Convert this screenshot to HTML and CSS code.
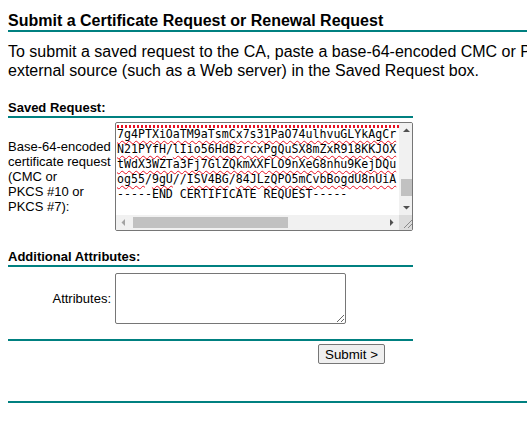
FILE: index.html
```html
<!DOCTYPE html>
<html>
<head>
    <meta charset="UTF-8">
    <title>Submit a Certificate Request or Renewal Request</title>
    <link rel="stylesheet" href="styles.css">
</head>
<body>
    <div class="page">
        <h1 class="page-title">Submit a Certificate Request or Renewal Request</h1>

        <p class="intro">To submit a saved request to the CA, paste a base-64-encoded CMC or PKCS #10 certificate request or PKCS #7 renewal request generated by an<br>external source (such as a Web server) in the Saved Request box.</p>

        <form class="request-form">
            <h2 class="section-title">Saved Request:</h2>
            <div class="field-row saved-row">
                <label class="field-label">Base-64-encoded<br>certificate request<br>(CMC or<br>PKCS #10 or<br>PKCS #7):</label>
                <div class="request-box">
                    <div class="request-text">
                        <div class="request-lines">
                            <div class="scrolled-off"><span class="sp"></span></div>
                            <div><span class="sp">7g4PTXiOaTM9aTsmCx7s31PaO74ulhvuGLYkAgCr</span></div>
                            <div><span class="sp">N21PYfH</span>/<span class="sp">lIio56HdBzrcxPgQuSX8mZxR918KKJOX</span></div>
                            <div><span class="sp">tWdX3WZTa3Fj7GlZQkmXXFLO9nXeG8nhu9KejDQu</span></div>
                            <div><span class="sp">og55</span>/<span class="sp">9gU</span>//<span class="sp">ISV4BG</span>/<span class="sp">84JLzQPO5mCvbBogdU8nUiA</span></div>
                            <div>-----END CERTIFICATE REQUEST-----</div>
                        </div>
                    </div>
                    <div class="vbar">
                        <div class="sb-btn">
                            <svg width="15" height="15" viewBox="0 0 15 15"><polygon points="4,9 11,9 7.5,5.5" fill="#505050"/></svg>
                        </div>
                        <div class="vtrack"><div class="vthumb"></div></div>
                        <div class="sb-btn">
                            <svg width="15" height="15" viewBox="0 0 15 15"><polygon points="4,6 11,6 7.5,9.5" fill="#505050"/></svg>
                        </div>
                    </div>
                    <div class="hbar">
                        <div class="sb-btn">
                            <svg width="15" height="15" viewBox="0 0 15 15"><polygon points="9,4 9,11 5.5,7.5" fill="#a3a3a3"/></svg>
                        </div>
                        <div class="htrack"><div class="hthumb"></div></div>
                        <div class="sb-btn">
                            <svg width="15" height="15" viewBox="0 0 15 15"><polygon points="6,4 6,11 9.5,7.5" fill="#505050"/></svg>
                        </div>
                    </div>
                    <div class="sb-corner">
                        <svg width="15" height="15" viewBox="0 0 15 15">
                            <line x1="13" y1="5" x2="5" y2="13" stroke="#8a8a8a" stroke-width="1"/>
                            <line x1="13" y1="9" x2="9" y2="13" stroke="#8a8a8a" stroke-width="1"/>
                        </svg>
                    </div>
                </div>
            </div>

            <h2 class="section-title">Additional Attributes:</h2>
            <div class="field-row attr-row">
                <label class="field-label align-right" for="attributes">Attributes:</label>
                <textarea id="attributes" class="attr-input"></textarea>
            </div>

            <div class="form-rule"></div>
            <div class="actions">
                <button type="button" class="submit-btn">Submit &gt;</button>
            </div>
        </form>

        <div class="footer-rule"></div>
    </div>
</body>
</html>
```

FILE: styles.css
```css
html, body {
    overflow: hidden;
}

body {
    margin: 0;
    background: #ffffff;
    color: #000000;
    font-family: "Liberation Sans", Arial, sans-serif;
}

.page {
    width: 1100px;
    padding: 12px 0 0 8px;
}

.page-title {
    margin: 0;
    font-size: 16px;
    line-height: 18px;
    font-weight: bold;
    border-bottom: 2px solid #008080;
}

.intro {
    margin: 10px 0 0;
    font-size: 16px;
    line-height: 19px;
    white-space: nowrap;
}

.request-form {
    width: 405px;
}

.section-title {
    margin: 0;
    padding-bottom: 1px;
    font-size: 13px;
    line-height: 15px;
    font-weight: bold;
    border-bottom: 2px solid #008080;
}

.request-form .section-title:first-child {
    margin-top: 20px;
}

.field-row {
    display: flex;
    align-items: center;
    gap: 4px;
}

.saved-row {
    margin-top: 4px;
    margin-bottom: 18px;
}

.attr-row {
    margin-top: 6px;
}

.field-label {
    width: 103px;
    flex-shrink: 0;
    font-size: 13px;
    line-height: 15px;
    white-space: nowrap;
}

.field-label.align-right {
    text-align: right;
}

/* saved request box, drawn scrolled like the browser shows it */
.request-box {
    width: 300px;
    height: 109px;
    box-sizing: border-box;
    border: 1px solid #767676;
    border-radius: 2px;
    display: grid;
    grid-template-columns: 283px 15px;
    grid-template-rows: 92px 15px;
    overflow: hidden;
}

.request-text {
    overflow: hidden;
    padding-left: 1px;
}

.request-lines {
    margin-top: -11px;
    font-family: "DejaVu Sans Mono", monospace;
    font-size: 11.6px;
    line-height: 15px;
    white-space: nowrap;
}

.scrolled-off {
    height: 15px;
    position: relative;
}

/* squiggle of the line scrolled above the top edge */
.scrolled-off .sp {
    position: absolute;
    left: 0;
    right: 0;
    top: 13px;
    height: 3px;
    background: repeating-linear-gradient(90deg, #e81123 0 2px, transparent 2px 4px);
}

.sp {
    text-decoration: underline wavy #e81123;
    text-decoration-thickness: 1px;
    text-underline-offset: 2px;
}

.vbar, .hbar {
    display: flex;
    background: #f1f1f1;
}

.vbar {
    flex-direction: column;
}

.sb-btn {
    width: 15px;
    height: 15px;
    flex-shrink: 0;
}

.sb-btn svg, .sb-corner svg {
    display: block;
}

.vtrack, .htrack {
    flex: 1;
}

.vthumb {
    margin: 41px 2px 0;
    height: 17px;
    background: #c1c1c1;
}

.hthumb {
    margin: 2px 0 0 2px;
    width: 155px;
    height: 11px;
    background: #c1c1c1;
}

.sb-corner {
    background: #dcdcdc;
}

.attr-input {
    display: block;
    width: 231px;
    height: 51px;
    box-sizing: border-box;
    margin: 0;
    padding: 2px;
    border: 1px solid #767676;
    border-radius: 2px;
    font-family: "DejaVu Sans Mono", monospace;
    font-size: 13px;
}

.form-rule {
    margin-top: 15px;
    height: 2px;
    background: #008080;
}

.actions {
    padding: 3px 0 0 310px;
}

.submit-btn {
    display: block;
    height: 20px;
    margin: 0;
    padding: 1px 6px;
    font-family: "Liberation Sans", Arial, sans-serif;
    font-size: 13.33px;
    line-height: 15px;
    color: #000000;
    background: #efefef;
    border: 1px solid #767676;
    border-radius: 2px;
}

.footer-rule {
    margin-top: 37px;
    height: 2px;
    background: #008080;
}
```
